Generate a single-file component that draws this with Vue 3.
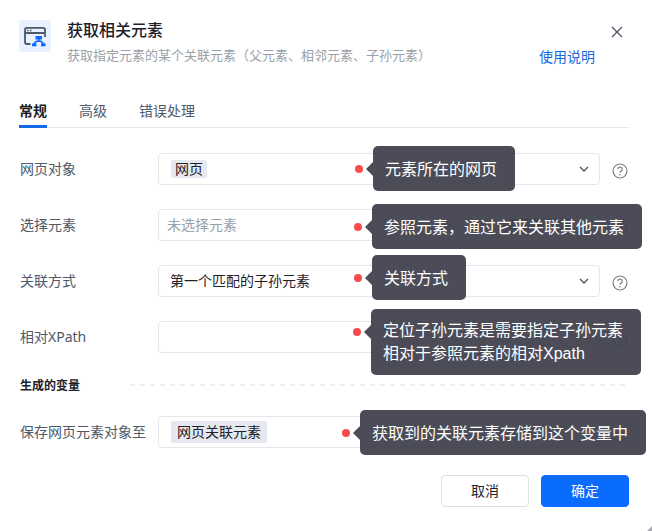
<script setup>
import { ref } from 'vue'

const tabs = ['常规', '高级', '错误处理']
const activeTab = ref('常规')
const element = ref('')
const relation = ref('first')
const xpath = ref('')
</script>

<template>
  <main class="dialog" role="dialog" aria-labelledby="dialog-title">
    <header class="header">
      <span class="logo">
        <svg width="32" height="32" viewBox="0 0 32 32" fill="none" aria-hidden="true">
          <path d="M11.500 24H8Q6 24 6 22V9.500Q6 7.800 8 7.800H24Q26 7.800 26 9.500V17M6 13H26" stroke="#4e5969" stroke-width="1.800" />
          <path d="M8 9.700h1.500v1.600H8zM11 9.700h1.500v1.600H11z" fill="#4e5969" />
          <path d="M16.500 16h6.500v3.400h-6.500zM13 23.500h4.500v2.700H13zM22 23.500h4.500v2.700H22z" fill="#0a6cff" />
          <path d="M19.750 19v2M15.200 24.500v-1.200l2.300-2h4.500l2.300 2v1.200" stroke="#0a6cff" stroke-width="1.600" />
        </svg>
      </span>
      <div class="heading">
        <h1 id="dialog-title">获取相关元素</h1>
        <p>获取指定元素的某个关联元素（父元素、相邻元素、子孙元素）</p>
      </div>
      <div class="header-side">
        <button class="close" type="button" aria-label="关闭">
          <svg width="12" height="12" viewBox="0 0 12 12" fill="none" stroke="#4e5969" stroke-width="1.400" aria-hidden="true">
            <path d="M1 1l10 10M11 1L1 11" />
          </svg>
        </button>
        <a class="doc-link" href="#help">使用说明</a>
      </div>
    </header>

    <nav class="tabs" role="tablist">
      <button
        v-for="tab in tabs"
        :key="tab"
        type="button"
        role="tab"
        class="tab"
        :class="{ active: tab === activeTab }"
        :aria-selected="tab === activeTab"
        @click="activeTab = tab"
      >{{ tab }}</button>
    </nav>

    <form class="form" @submit.prevent>
      <div class="row">
        <label for="page">网页对象</label>
        <div class="field">
          <button id="page" type="button" class="control tag-control" aria-haspopup="listbox"><span class="tag">网页</span></button>
          <svg class="chevron" viewBox="0 0 10 6" aria-hidden="true"><path d="M1 1l4 4 4-4" /></svg>
          <div class="note note-page"><i class="dot"></i><i class="arrow"></i><span class="bubble">元素所在的网页</span></div>
        </div>
        <button class="help" type="button" aria-label="帮助">
          <svg width="16" height="16" viewBox="0 0 16 16" aria-hidden="true"><circle cx="8" cy="8" r="7" /><path d="M5.800 6.200a2.200 2.200 0 1 1 3.200 2Q8 8.700 8 9.800M8 11v1.400" /></svg>
        </button>
      </div>

      <div class="row">
        <label for="element">选择元素</label>
        <div class="field split">
          <div class="select-box">
            <select id="element" v-model="element" class="control placeholder">
              <option value="">未选择元素</option>
            </select>
            <svg class="chevron" viewBox="0 0 10 6" aria-hidden="true"><path d="M1 1l4 4 4-4" /></svg>
          </div>
          <button class="control capture" type="button">捕获新元素</button>
          <div class="note note-element"><i class="dot"></i><i class="arrow"></i><span class="bubble">参照元素，通过它来关联其他元素</span></div>
        </div>
        <button class="help" type="button" aria-label="帮助">
          <svg width="16" height="16" viewBox="0 0 16 16" aria-hidden="true"><circle cx="8" cy="8" r="7" /><path d="M5.800 6.200a2.200 2.200 0 1 1 3.200 2Q8 8.700 8 9.800M8 11v1.400" /></svg>
        </button>
      </div>

      <div class="row">
        <label for="relation">关联方式</label>
        <div class="field">
          <select id="relation" v-model="relation" class="control">
            <option value="first">第一个匹配的子孙元素</option>
          </select>
          <svg class="chevron" viewBox="0 0 10 6" aria-hidden="true"><path d="M1 1l4 4 4-4" /></svg>
          <div class="note note-relation"><i class="dot"></i><i class="arrow"></i><span class="bubble">关联方式</span></div>
        </div>
        <button class="help" type="button" aria-label="帮助">
          <svg width="16" height="16" viewBox="0 0 16 16" aria-hidden="true"><circle cx="8" cy="8" r="7" /><path d="M5.800 6.200a2.200 2.200 0 1 1 3.200 2Q8 8.700 8 9.800M8 11v1.400" /></svg>
        </button>
      </div>

      <div class="row">
        <label for="xpath">相对<span class="latin">XPath</span></label>
        <div class="field">
          <input id="xpath" v-model="xpath" type="text" class="control" />
          <div class="note note-xpath"><i class="dot"></i><i class="arrow"></i><span class="bubble">定位子孙元素是需要指定子孙元素<br />相对于参照元素的相对Xpath</span></div>
        </div>
        <button class="help" type="button" aria-label="帮助">
          <svg width="16" height="16" viewBox="0 0 16 16" aria-hidden="true"><circle cx="8" cy="8" r="7" /><path d="M5.800 6.200a2.200 2.200 0 1 1 3.200 2Q8 8.700 8 9.800M8 11v1.400" /></svg>
        </button>
      </div>

      <div class="section">
        <h2>生成的变量</h2>
        <span class="dashes"></span>
      </div>

      <div class="row">
        <label for="output">保存网页元素对象至</label>
        <div class="field">
          <button id="output" type="button" class="control tag-control"><span class="tag tag-wide">网页关联元素</span></button>
          <div class="note note-output"><i class="dot"></i><i class="arrow"></i><span class="bubble">获取到的关联元素存储到这个变量中</span></div>
        </div>
        <button class="help" type="button" aria-label="帮助">
          <svg width="16" height="16" viewBox="0 0 16 16" aria-hidden="true"><circle cx="8" cy="8" r="7" /><path d="M5.800 6.200a2.200 2.200 0 1 1 3.200 2Q8 8.700 8 9.800M8 11v1.400" /></svg>
        </button>
      </div>

      <footer class="footer">
        <button class="btn" type="button">取消</button>
        <button class="btn primary" type="submit">确定</button>
      </footer>
    </form>
    <svg class="grip" width="5" height="5" viewBox="0 0 5 5" aria-hidden="true"><path d="M5 0v5H0z" fill="#a8abb0" /></svg>
  </main>
</template>

<style>
body {
  margin: 0;
  background: #fff;
}
</style>

<style scoped>
.dialog {
  position: relative;
  box-sizing: border-box;
  min-height: 100vh;
  padding: 20px 23px 24px 19px;
  background: #fff;
  color: #1d2129;
  font-family: "Noto Sans CJK SC", sans-serif;
  font-size: 14px;
  line-height: 20px;
}
button, input, select {
  margin: 0;
  font: inherit;
  color: inherit;
}
.header {
  display: flex;
}
.logo {
  width: 32px;
  height: 32px;
  border-radius: 4px;
  background: #e8f1ff;
}
.logo svg {
  display: block;
}
.heading {
  flex: 1;
  margin-left: 16px;
}
.heading h1 {
  margin: 0;
  font-size: 16px;
  line-height: 18px;
  font-weight: 500;
}
.heading p {
  margin: 8px 0 0;
  font-size: 13px;
  line-height: 18px;
  color: #9a9fa8;
}
.header-side {
  display: flex;
  flex-direction: column;
  align-items: flex-end;
  gap: 2px;
}
.close {
  display: flex;
  align-items: center;
  justify-content: center;
  width: 24px;
  height: 24px;
  padding: 0;
  border: 0;
  background: none;
}
.doc-link {
  margin-right: 34px;
  color: #1668dc;
  text-decoration: none;
}
.tabs {
  display: flex;
  gap: 32px;
  margin-top: 34px;
  border-bottom: 1px solid #e5e6eb;
}
.tab {
  height: 28px;
  margin-bottom: -1px;
  padding: 0 0 6px;
  border: 0;
  border-bottom: 3px solid transparent;
  background: none;
  color: #4e5969;
}
.tab.active {
  border-color: #1668e6;
  color: #1d2129;
  font-weight: 700;
}
.form {
  margin-top: 25px;
}
.row {
  display: flex;
  align-items: center;
  height: 32px;
}
.row + .row {
  margin-top: 24px;
}
.row label {
  box-sizing: border-box;
  width: 139px;
  padding: 0 0 3px 1px;
  color: #4e5969;
}
.latin {
  font-family: "Noto Sans", sans-serif;
  line-height: 1;
}
.field {
  position: relative;
  flex: 1;
}
.split {
  display: flex;
  gap: 12px;
}
.select-box {
  position: relative;
  flex: 1;
}
.control {
  display: block;
  box-sizing: border-box;
  width: 100%;
  height: 32px;
  padding: 0 11px 2px;
  border: 1px solid #e5e6eb;
  border-radius: 4px;
  background: #fff;
  appearance: none;
  text-align: left;
}
.placeholder {
  padding: 0 8px 2px;
  color: #9a9fa8;
}
.capture {
  width: 124px;
  text-align: center;
}
.tag-control {
  padding: 0 12px;
}
.tag {
  display: block;
  width: fit-content;
  height: 18px;
  padding: 0 4px;
  border-radius: 2px;
  background: #e5e8ef;
  line-height: 16px;
}
.tag-wide {
  height: 22px;
  padding: 0 6px;
  line-height: 20px;
}
.chevron {
  position: absolute;
  top: 13px;
  right: 11px;
  width: 10px;
  height: 6px;
  fill: none;
  stroke: #4e5969;
  stroke-width: 1.4;
}
.help {
  display: flex;
  width: 29px;
  padding: 3px 0 0 12px;
  border: 0;
  background: none;
}
.help svg {
  flex: none;
  fill: none;
  stroke: #7c8087;
  stroke-width: 1.2;
}
.note {
  position: absolute;
  z-index: 1;
  display: flex;
  align-items: flex-start;
}
.note-page { top: -7px; left: 197px; }
.note-element { top: -5px; left: 196px; }
.note-relation { top: -10px; left: 196px; }
.note-xpath { top: -12px; left: 195px; }
.note-output { top: -6px; left: 184px; }
.dot {
  width: 8px;
  height: 8px;
  margin: 19px 3px 0 0;
  border-radius: 50%;
  background: #fa4b4b;
}
.arrow {
  margin-top: 16px;
  border: 7px solid transparent;
  border-left: 0;
  border-right-color: #4b4c58;
}
.bubble {
  padding: 10px 18px 11px 12px;
  border-radius: 5px;
  background: rgba(64, 65, 77, 0.94);
  color: #fff;
  font-size: 16px;
  line-height: 24px;
  white-space: nowrap;
}
.note-xpath .bubble {
  padding: 10px 18px 10px 12px;
  font-family: "Liberation Sans", "Noto Sans CJK SC", sans-serif;
  line-height: 23px;
}
.note-output .bubble {
  padding-right: 18px;
}
.section {
  display: flex;
  align-items: center;
  gap: 50px;
  margin: 22px 0 21px;
  padding-left: 1px;
}
.section h2 {
  margin: 0;
  font-size: 12px;
  line-height: 20px;
  font-weight: 700;
}
.dashes {
  flex: 1;
  height: 2px;
  background: repeating-linear-gradient(90deg, #ecedf1 0 5px, transparent 5px 10px);
}
.footer {
  display: flex;
  justify-content: flex-end;
  gap: 12px;
  margin-top: 27px;
}
.btn {
  width: 88px;
  height: 32px;
  padding: 0 0 2px;
  border: 1px solid #dfe0e4;
  border-radius: 4px;
  background: #fff;
}
.primary {
  border-color: #0a6cff;
  background: #0a6cff;
  color: #fff;
}
.grip {
  position: absolute;
  right: 0;
  bottom: 0;
}
</style>
